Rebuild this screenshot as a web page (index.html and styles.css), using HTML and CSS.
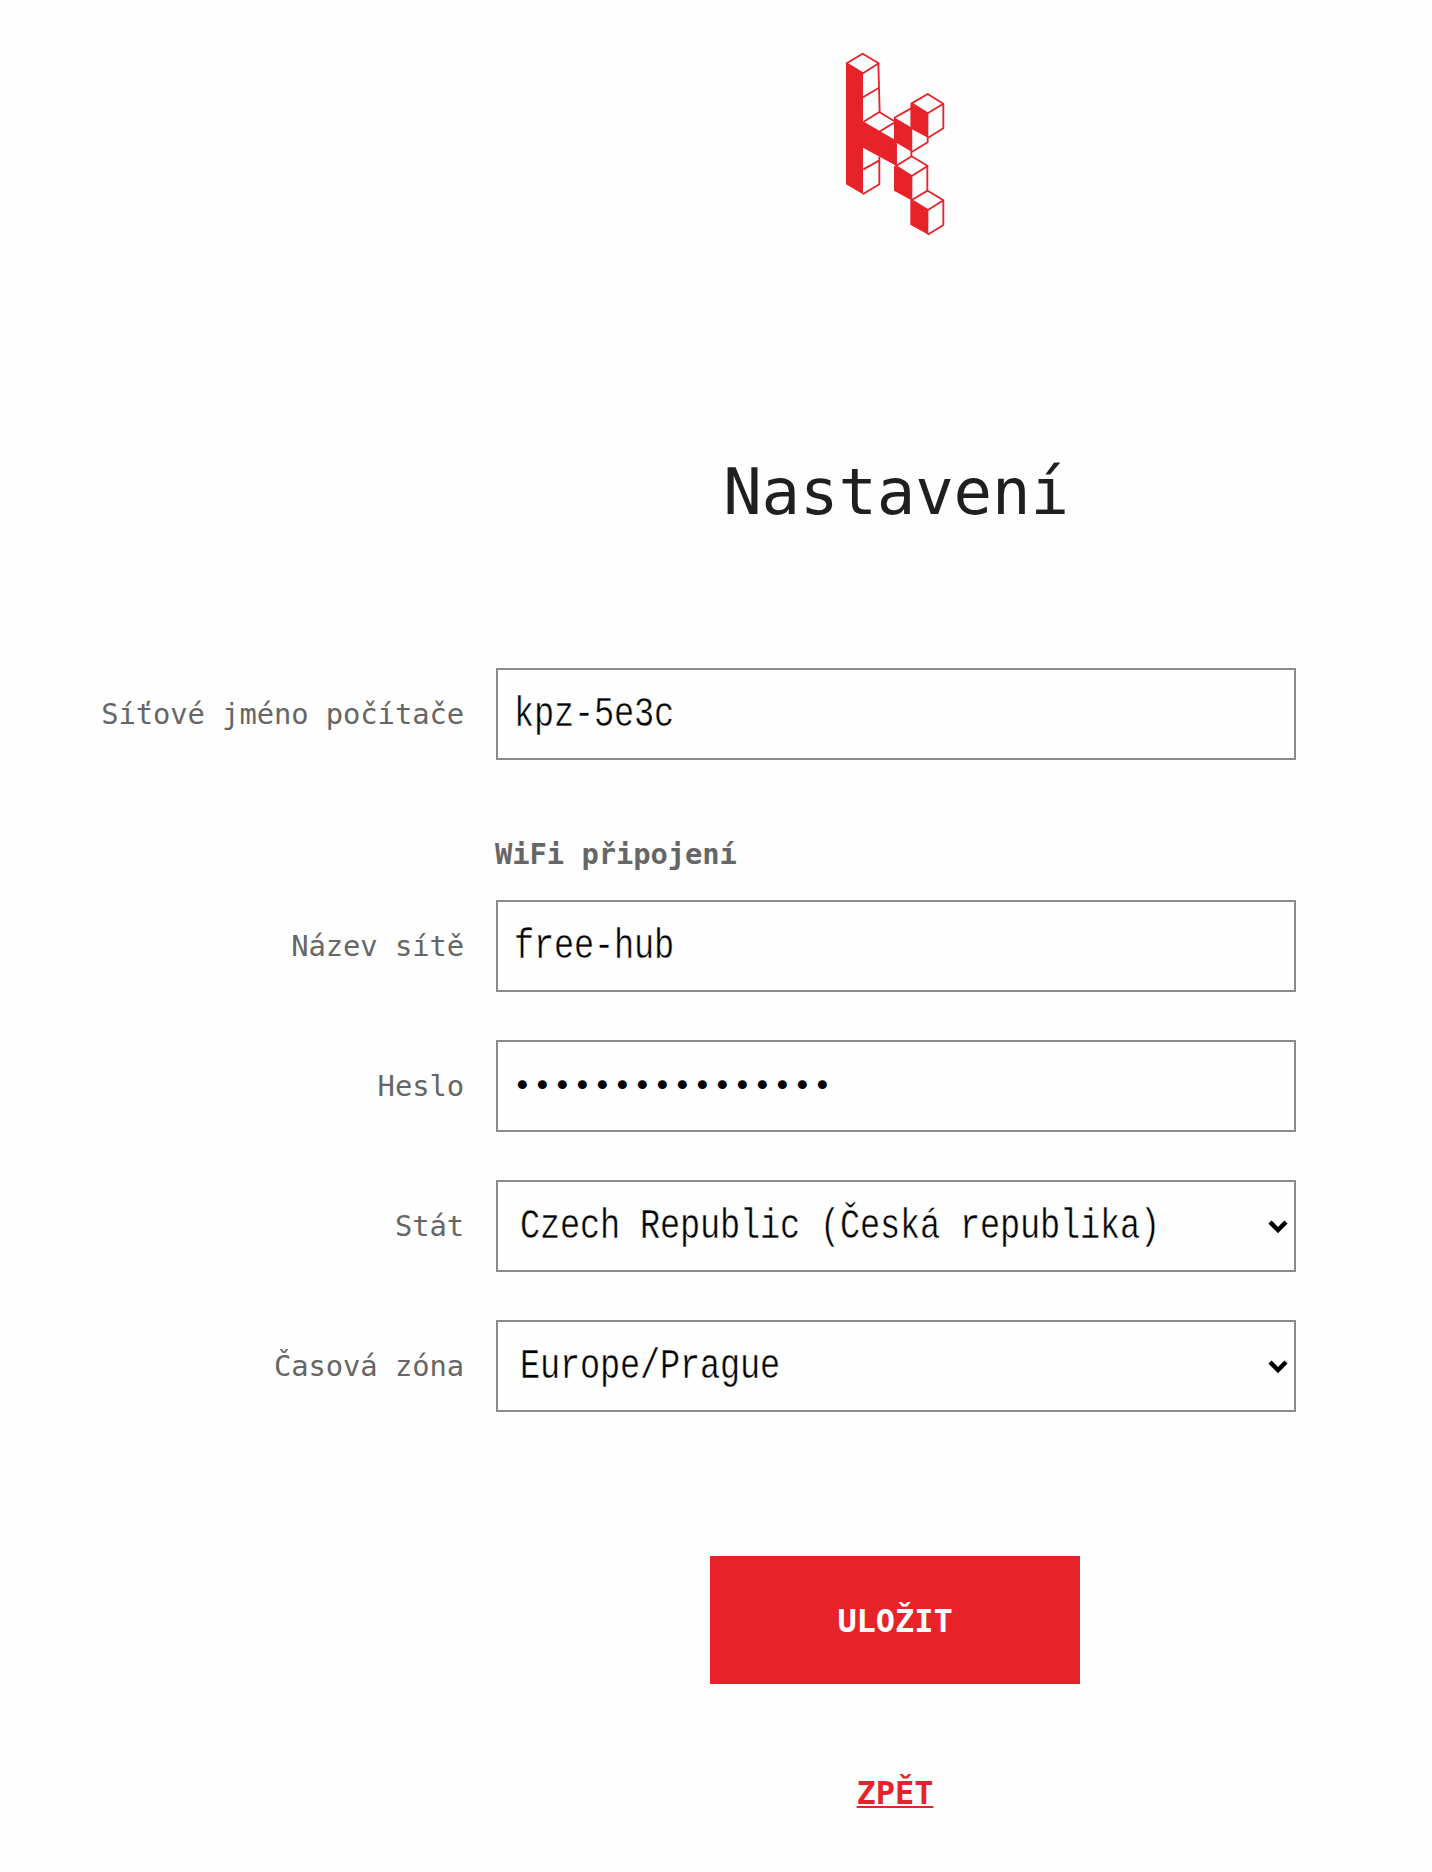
FILE: index.html
```html
<!DOCTYPE html>
<html lang="cs">
<head>
<meta charset="utf-8">
<title>Nastavení</title>
<link rel="stylesheet" href="styles.css">
</head>
<body>
<main class="page">
  <svg class="logo" viewBox="0 0 390 600" aria-hidden="true">
    <g class="logo-fill">
      <path d="M48 70L99 100V244L192 298V232L243 262V192L295 220V294L246 268V336L200 309V378L99 323V463L48 433Z"/>
      <path d="M192 377L247 408V482L192 452Z"/>
      <path d="M241 480L295 510V584L241 554Z"/>
    </g>
    <g class="logo-line">
      <path d="M50 70L98 41L146 70L99 100ZM145 70L149 215M99 172L146 144M101 245L148 216L192 243M148 275L192 248M192 234L243 205M100 388L148 361M148 350V433L98 463"/>
      <path d="M245 190L293 162L340 191L293 220ZM340 191V265L293 294V307L245 336M244 190V350"/>
      <path d="M198 312V378M198 378L245 349L293 378L245 408ZM292 378V452M245 480L293 452L340 481L294 510ZM340 481V555L293 584"/>
    </g>
  </svg>
  <h1 class="title">Nastavení</h1>
  <form class="form">
    <div class="row row-host"><span class="label">Síťové jméno počítače</span><div class="field"><span class="value">kpz-5e3c</span></div></div>
    <h2 class="section">WiFi připojení</h2>
    <div class="row"><span class="label">Název sítě</span><div class="field"><span class="value">free-hub</span></div></div>
    <div class="row"><span class="label">Heslo</span><div class="field"><span class="dots">••••••••••••••••</span></div></div>
    <div class="row"><span class="label">Stát</span><div class="field select"><span class="value">Czech Republic (Česká republika)</span><svg class="arrow" viewBox="0 0 20 14"><path d="M2 3L10 11L18 3"/></svg></div></div>
    <div class="row"><span class="label">Časová zóna</span><div class="field select"><span class="value">Europe/Prague</span><svg class="arrow" viewBox="0 0 20 14"><path d="M2 3L10 11L18 3"/></svg></div></div>
    <div class="actions">
      <button class="save" type="button">ULOŽIT</button>
      <a class="back" href="#">ZPĚT</a>
    </div>
  </form>
</main>
</body>
</html>
```
FILE: styles.css
```css
* { box-sizing: border-box; }
body {
  margin: 0;
  background: #fefefe;
  color: #1f1f1f;
  font-family: "DejaVu Sans Mono", monospace;
}
.page {
  width: 1296px;
  height: 1872px;
  padding: 40px 0 0 80px;
  display: flex;
  flex-direction: column;
}
.logo { width: 130px; height: 200px; margin-left: 750px; flex: none; }
.logo-fill { fill: #e72329; }
.logo-line { fill: none; stroke: #e72329; stroke-width: 5.5; stroke-linejoin: round; }
.title {
  width: 800px;
  margin: 212px 0 0 416px;
  font-size: 64px;
  line-height: 80px;
  font-weight: 400;
  letter-spacing: -0.13px;
  text-align: center;
}
.form { margin-top: 136px; }
.row {
  display: grid;
  grid-template-columns: 384px 800px;
  column-gap: 32px;
  align-items: center;
  margin-bottom: 48px;
}
.row-host { margin-bottom: 72px; }
.label {
  color: #666;
  font-size: 28.8px;
  line-height: 36px;
  letter-spacing: -0.06px;
  text-align: right;
  white-space: nowrap;
}
.section {
  margin: 0 0 24px 415px;
  color: #666;
  font-size: 28.8px;
  line-height: 44px;
  letter-spacing: -0.06px;
}
.field {
  height: 92px;
  padding: 0 6px 0 16px;
  border: 2px solid #8b8b8b;
  background: #fefefe;
  color: #000;
  display: flex;
  align-items: center;
  justify-content: space-between;
}
.select { padding-left: 22px; }
.value {
  width: 0;
  padding-top: 2px;
  font-family: "Liberation Mono", monospace;
  font-size: 42px;
  line-height: 48px;
  letter-spacing: -0.2px;
  white-space: pre;
  transform: scaleX(0.8);
  transform-origin: 0 50%;
  -webkit-text-stroke: 0.45px #fefefe;
}
.dots {
  padding-bottom: 3px;
  font-size: 31px;
  line-height: 40px;
  letter-spacing: 1.34px;
  margin-left: -1px;
}
.arrow { width: 20px; height: 14px; fill: none; stroke: #000; stroke-width: 4.5; }
.actions {
  width: 800px;
  margin: 144px 0 0 415px;
  display: flex;
  flex-direction: column;
  align-items: center;
}
.save {
  width: 370px;
  height: 128px;
  border: 0;
  padding: 2px 0 0;
  background: #e72329;
  color: #fff;
  font: 700 32px/40px "DejaVu Sans Mono", monospace;
  letter-spacing: -0.06px;
}
.back {
  margin-top: 89px;
  color: #e72329;
  font-size: 32px;
  line-height: 40px;
  font-weight: 700;
  letter-spacing: -0.06px;
  text-decoration: underline;
  text-decoration-thickness: 2px;
  text-underline-offset: 2px;
  text-decoration-skip-ink: none;
}
```
